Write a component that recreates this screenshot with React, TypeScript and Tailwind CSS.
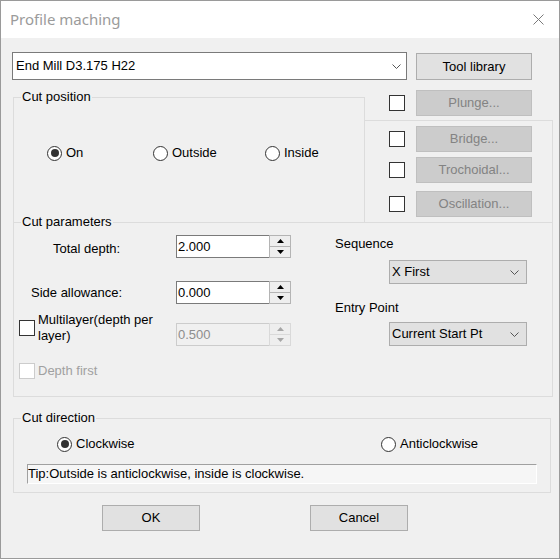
import React from 'react'

function Chevron() {
  return (
    <svg width="9" height="5" viewBox="0 0 9 5" className="shrink-0">
      <polyline points="0.5,0.5 4.5,4.5 8.5,0.5" fill="none" stroke="#555555" strokeWidth="1" />
    </svg>
  )
}

function Tri({ up, color }: { up?: boolean; color: string }) {
  return (
    <svg width="7" height="4" viewBox="0 0 7 4">
      <polygon points={up ? '0,4 7,4 3.5,0' : '0,0 7,0 3.5,4'} fill={color} />
    </svg>
  )
}

function CheckBox({ disabled }: { disabled?: boolean }) {
  return (
    <span
      className={
        disabled
          ? 'block w-[16px] h-[16px] shrink-0 border border-[#cccccc] bg-white'
          : 'block w-[16px] h-[16px] shrink-0 border border-[#333333] bg-white'
      }
    />
  )
}

function Radio({ checked, label }: { checked?: boolean; label: string }) {
  return (
    <div className="flex items-center gap-[4px]">
      <span className="w-[15px] h-[15px] rounded-full border border-[#333333] bg-white flex items-center justify-center shrink-0">
        {checked && <span className="w-[8px] h-[8px] rounded-full bg-[#333333]" />}
      </span>
      <span className="leading-[16px]">{label}</span>
    </div>
  )
}

function GrayButton({ label }: { label: string }) {
  return (
    <div className="w-[116px] h-[26px] bg-[#cccccc] border border-[#bfbfbf] text-[#838383] flex items-center justify-center">
      {label}
    </div>
  )
}

function Spin({ value, disabled }: { value: string; disabled?: boolean }) {
  return (
    <div className="flex w-[115px] h-[23px]">
      <div
        className={
          disabled
            ? 'flex-1 border-l border-t border-b border-[#cccccc] bg-[#f0f0f0] text-[#8d8d8d] flex items-center pl-[1px]'
            : 'flex-1 border-l border-t border-b border-[#7a7a7a] bg-white flex items-center pl-[1px]'
        }
      >
        {value}
      </div>
      <div
        className={
          disabled
            ? 'w-[22px] border border-[#d9d9d9] flex flex-col'
            : 'w-[22px] border border-[#b4b4b4] flex flex-col'
        }
      >
        <div className="flex-1 bg-[#eeeeee] flex items-center justify-center">
          <Tri up color={disabled ? '#a6a6a6' : '#000000'} />
        </div>
        <div
          className={
            disabled
              ? 'flex-1 bg-[#eeeeee] border-t border-[#d9d9d9] flex items-center justify-center'
              : 'flex-1 bg-[#eeeeee] border-t border-[#b4b4b4] flex items-center justify-center'
          }
        >
          <Tri color={disabled ? '#a6a6a6' : '#000000'} />
        </div>
      </div>
    </div>
  )
}

function Select({ value }: { value: string }) {
  return (
    <div className="w-[138px] h-[24px] bg-[#e1e1e1] border border-[#adadad] flex items-center justify-between pl-[2px] pr-[7px]">
      <span>{value}</span>
      <Chevron />
    </div>
  )
}

function Legend({ text }: { text: string }) {
  return (
    <span className="absolute -top-[9px] left-[7px] px-[1px] bg-[#f0f0f0] leading-[15px]">{text}</span>
  )
}

export default function App() {
  return (
    <div className="w-[560px] h-[559px] border border-[#9a9a9a] bg-[#f0f0f0] flex flex-col font-['Liberation_Sans',Arial,sans-serif] text-[13px] text-black">
      {/* title bar */}
      <div className="h-[37px] bg-white flex items-center justify-between pl-[9px] pr-[15px] shrink-0">
        <span className="font-['Noto_Sans',sans-serif] text-[15px] text-[#9b9b9b]">Profile maching</span>
        <svg width="11" height="11" viewBox="0 0 11 11">
          <line x1="0.5" y1="0.5" x2="10.5" y2="10.5" stroke="#7a7a7a" strokeWidth="1" />
          <line x1="10.5" y1="0.5" x2="0.5" y2="10.5" stroke="#7a7a7a" strokeWidth="1" />
        </svg>
      </div>

      <div className="flex-1 pt-[14px] pl-[11px]">
        {/* tool row */}
        <div className="flex items-start h-[28px]">
          <div className="w-[395px] h-[28px] border border-[#7a7a7a] bg-white flex items-center justify-between pl-[3px] pr-[5px]">
            <span>End Mill D3.175 H22</span>
            <Chevron />
          </div>
          <div className="ml-[9px] mt-[1px] w-[116px] h-[27px] bg-[#e1e1e1] border border-[#adadad] flex items-center justify-center">
            Tool library
          </div>
        </div>

        {/* upper region */}
        <div className="mt-[10px] flex h-[132px]">
          <div className="ml-[1px] mt-[7px] w-[352px] h-[125px] border-l border-t border-r border-[#dcdcdc] relative">
            <Legend text="Cut position" />
            <div className="mt-[47px] pl-[33px] flex items-center">
              <div className="w-[106px]">
                <Radio checked label="On" />
              </div>
              <div className="w-[112px]">
                <Radio label="Outside" />
              </div>
              <Radio label="Inside" />
            </div>
          </div>

          <div className="w-[188px] flex flex-col">
            <div className="h-[26px] flex items-center">
              <span className="ml-[24px]">
                <CheckBox />
              </span>
              <span className="ml-[11px]">
                <GrayButton label="Plunge..." />
              </span>
            </div>
            <div className="mt-[4px] h-[102px] border-t border-r border-[#dcdcdc] flex flex-col pt-[5px]">
              <div className="h-[26px] flex items-center">
                <span className="ml-[24px]">
                  <CheckBox />
                </span>
                <span className="ml-[11px]">
                  <GrayButton label="Bridge..." />
                </span>
              </div>
              <div className="mt-[5px] h-[26px] flex items-center">
                <span className="ml-[24px]">
                  <CheckBox />
                </span>
                <span className="ml-[11px]">
                  <GrayButton label="Trochoidal..." />
                </span>
              </div>
              <div className="mt-[8px] h-[26px] flex items-center">
                <span className="ml-[24px]">
                  <CheckBox />
                </span>
                <span className="ml-[11px]">
                  <GrayButton label="Oscillation..." />
                </span>
              </div>
            </div>
          </div>
        </div>

        {/* cut parameters */}
        <div className="ml-[1px] w-[540px] h-[175px] border border-[#dcdcdc] relative flex">
          <Legend text="Cut parameters" />
          <div className="w-[305px] flex flex-col">
            <div className="mt-[12px] h-[23px] flex items-center">
              <span className="w-[162px] pl-[39px] pt-[4px]">Total depth:</span>
              <Spin value="2.000" />
            </div>
            <div className="mt-[23px] h-[23px] flex items-center">
              <span className="w-[162px] pl-[17px] pt-[1px]">Side allowance:</span>
              <Spin value="0.000" />
            </div>
            <div className="mt-[19px] h-[23px] flex items-start">
              <div className="w-[162px] -mt-[11px] flex items-center">
                <span className="ml-[5px]">
                  <CheckBox />
                </span>
                <span className="ml-[3px] leading-[16px]">
                  Multilayer(depth per
                  <br />
                  layer)
                </span>
              </div>
              <Spin value="0.500" disabled />
            </div>
            <div className="mt-[17px] h-[16px] flex items-center">
              <span className="ml-[5px]">
                <CheckBox disabled />
              </span>
              <span className="ml-[3px] text-[#a0a0a0]">Depth first</span>
            </div>
          </div>
          <div className="pl-[16px] flex flex-col">
            <span className="mt-[13px] leading-[16px]">Sequence</span>
            <div className="mt-[8px] ml-[54px]">
              <Select value="X First" />
            </div>
            <span className="mt-[16px] leading-[16px]">Entry Point</span>
            <div className="mt-[6px] ml-[54px]">
              <Select value="Current Start Pt" />
            </div>
          </div>
        </div>

        {/* cut direction */}
        <div className="mt-[21px] ml-[1px] w-[538px] h-[75px] border border-[#dcdcdc] relative">
          <Legend text="Cut direction" />
          <div className="mt-[17px] pl-[43px] flex items-center">
            <div className="w-[324px]">
              <Radio checked label="Clockwise" />
            </div>
            <Radio label="Anticlockwise" />
          </div>
          <div className="mt-[12px] ml-[13px] w-[510px] h-[20px] border-t border-l border-[#a0a0a0] border-r border-b border-r-white border-b-white bg-[#f6f6f6] flex items-center leading-[16px]">
            Tip:Outside is anticlockwise, inside is clockwise.
          </div>
        </div>

        {/* dialog buttons */}
        <div className="mt-[12px] flex">
          <div className="ml-[90px] w-[98px] h-[26px] bg-[#e1e1e1] border border-[#adadad] flex items-center justify-center">
            OK
          </div>
          <div className="ml-[110px] w-[98px] h-[26px] bg-[#e1e1e1] border border-[#adadad] flex items-center justify-center">
            Cancel
          </div>
        </div>
      </div>
    </div>
  )
}
